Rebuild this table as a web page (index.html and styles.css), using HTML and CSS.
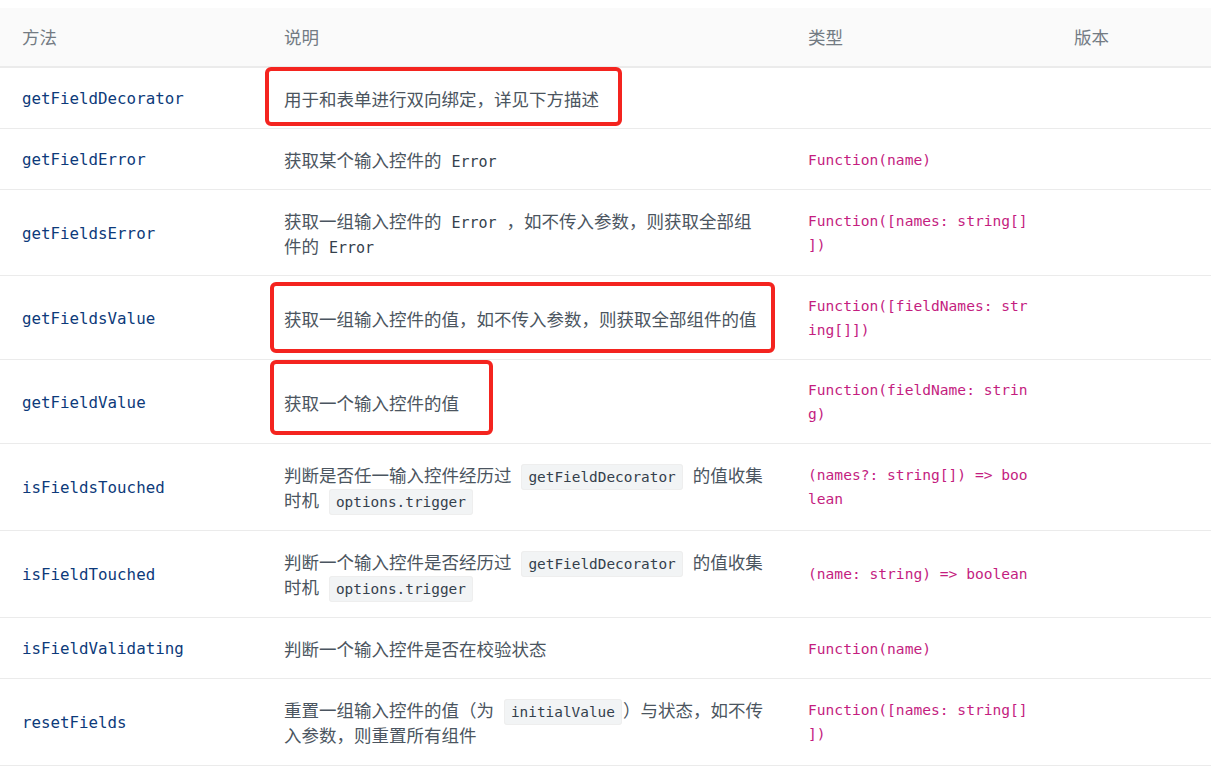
FILE: index.html
```html
<!DOCTYPE html>
<html lang="zh-CN">
	<head>
		<meta charset="UTF-8">
		<meta name="viewport" content="width=device-width, initial-scale=1.0">
		<title>Form API</title>
		<link rel="stylesheet" href="styles.css">
	</head>
	<body>
		<div class="api-wrap">
			<table class="api-table">
				<colgroup>
					<col class="col-method">
					<col class="col-desc">
					<col class="col-type">
					<col class="col-version">
				</colgroup>
				<thead>
					<tr>
						<th>方法</th>
						<th>说明</th>
						<th>类型</th>
						<th>版本</th>
					</tr>
				</thead>
				<tbody>
					<tr>
						<td>getFieldDecorator</td>
						<td>用于和表单进行双向绑定，详见下方描述</td>
						<td></td>
						<td></td>
					</tr>
					<tr>
						<td>getFieldError</td>
						<td>获取某个输入控件的 <span class="mono">Error</span></td>
						<td>Function(name)</td>
						<td></td>
					</tr>
					<tr>
						<td>getFieldsError</td>
						<td>获取一组输入控件的 <span class="mono">Error</span> ，如不传入参数，则获取全部组件的 <span class="mono">Error</span></td>
						<td>Function([names: string[]])</td>
						<td></td>
					</tr>
					<tr>
						<td>getFieldsValue</td>
						<td>获取一组输入控件的值，如不传入参数，则获取全部组件的值</td>
						<td>Function([fieldNames: string[]])</td>
						<td></td>
					</tr>
					<tr>
						<td>getFieldValue</td>
						<td>获取一个输入控件的值</td>
						<td>Function(fieldName: string)</td>
						<td></td>
					</tr>
					<tr class="code-row">
						<td>isFieldsTouched</td>
						<td>判断是否任一输入控件经历过 <code>getFieldDecorator</code> 的值收集时机 <code>options.trigger</code></td>
						<td>(names?: string[]) =&gt; boolean</td>
						<td></td>
					</tr>
					<tr class="code-row">
						<td>isFieldTouched</td>
						<td>判断一个输入控件是否经历过 <code>getFieldDecorator</code> 的值收集时机 <code>options.trigger</code></td>
						<td>(name: string) =&gt; boolean</td>
						<td></td>
					</tr>
					<tr>
						<td>isFieldValidating</td>
						<td>判断一个输入控件是否在校验状态</td>
						<td>Function(name)</td>
						<td></td>
					</tr>
					<tr class="code-row">
						<td>resetFields</td>
						<td>重置一组输入控件的值（为 <code class="code-end">initialValue</code>）与状态，如不传入参数，则重置所有组件</td>
						<td>Function([names: string[]])</td>
						<td></td>
					</tr>
				</tbody>
			</table>

			<!-- annotation boxes drawn over the screenshot -->
			<div class="mark mark-1"></div>
			<div class="mark mark-2"></div>
			<div class="mark mark-3"></div>
		</div>
	</body>
</html>
```

FILE: styles.css
```css
body {
    margin: 0;
    background-color: #ffffff;
    font-family: "Noto Sans CJK SC", "Noto Sans", sans-serif;
    color: #4b5560;
}

.api-wrap {
    position: relative;
    padding-top: 8px;
}

.api-table {
    width: 1211px;
    table-layout: fixed;
    border-collapse: collapse;
    font-size: 17.5px;
    line-height: 25px;
}

.col-method {
    width: 262px;
}

.col-desc {
    width: 524px;
}

.col-type {
    width: 266px;
}

.col-version {
    width: 159px;
}

.api-table th {
    background-color: #fafafa;
    color: #737b83;
    font-weight: 400;
    text-align: left;
    padding: 16px 22px 17px 22px;
    border-bottom: 2px solid #ebebeb;
}

.api-table td {
    padding: 18px 22px 17px 22px;
    border-bottom: 1px solid #ebebeb;
    vertical-align: middle;
    word-break: break-all;
}

.api-table td:first-child {
    font-family: "DejaVu Sans Mono", "Liberation Mono", monospace;
    font-size: 15.8px;
    color: #0d3a7a;
}

.api-table td:nth-child(2) {
    padding-right: 20px;
}

.api-table td:nth-child(3) {
    font-family: "DejaVu Sans Mono", "Liberation Mono", monospace;
    font-size: 14.6px;
    line-height: 24px;
    color: #c41d7f;
    line-break: anywhere;
}

.mono {
    font-family: "DejaVu Sans Mono", "Liberation Mono", monospace;
    font-size: 15px;
    line-height: 1;
    color: #34404c;
    padding: 0 6px;
}

.code-row td {
    padding-top: 18px;
    padding-bottom: 18px;
}

code {
    font-family: "DejaVu Sans Mono", "Liberation Mono", monospace;
    font-size: 14.4px;
    line-height: 1;
    color: #34404c;
    background-color: #f2f4f5;
    border: 1px solid #eeeeee;
    border-radius: 3px;
    padding: 4px 6px;
    margin: 0 6px;
}

code.code-end {
    margin-right: 1px;
}

.mark {
    position: absolute;
    border: 4px solid #f4241f;
    border-radius: 6px;
    box-sizing: border-box;
}

.mark-1 {
    left: 265px;
    top: 67px;
    width: 357px;
    height: 59px;
}

.mark-2 {
    left: 270px;
    top: 282px;
    width: 505px;
    height: 71px;
}

.mark-3 {
    left: 270px;
    top: 360px;
    width: 223px;
    height: 75px;
}
```
